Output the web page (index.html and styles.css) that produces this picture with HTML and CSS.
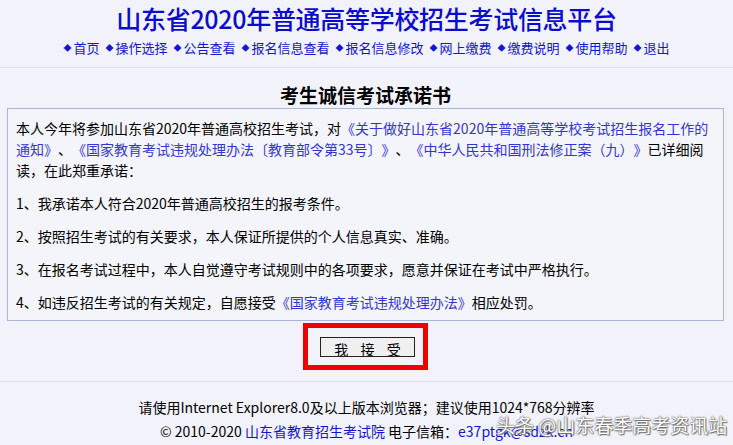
FILE: index.html
```html
<!DOCTYPE html>
<html lang="zh-CN">
<head>
<meta charset="utf-8">
<title>山东省2020年普通高等学校招生考试信息平台</title>
<link rel="stylesheet" href="styles.css">
</head>
<body>
<div class="page">
  <header class="top">
    <h1 class="site-title">山东省2020年普通高等学校招生考试信息平台</h1>
    <nav class="nav">
      <a href="#"><span class="dot">◆</span>首页</a>
      <a href="#"><span class="dot">◆</span>操作选择</a>
      <a href="#"><span class="dot">◆</span>公告查看</a>
      <a href="#"><span class="dot">◆</span>报名信息查看</a>
      <a href="#"><span class="dot">◆</span>报名信息修改</a>
      <a href="#"><span class="dot">◆</span>网上缴费</a>
      <a href="#"><span class="dot">◆</span>缴费说明</a>
      <a href="#"><span class="dot">◆</span>使用帮助</a>
      <a href="#"><span class="dot">◆</span>退出</a>
    </nav>
  </header>
  <main class="main">
    <h2 class="heading">考生诚信考试承诺书</h2>
    <div class="pledge">
      <p>本人今年将参加山东省2020年普通高校招生考试，对<a href="#">《关于做好山东省2020年普通高等学校考试招生报名工作的通知》</a>、<a href="#">《国家教育考试违规处理办法〔教育部令第33号〕》</a>、<a href="#">《中华人民共和国刑法修正案（九）》</a>已详细阅读，在此郑重承诺：</p>
      <p>1、我承诺本人符合2020年普通高校招生的报考条件。</p>
      <p>2、按照招生考试的有关要求，本人保证所提供的个人信息真实、准确。</p>
      <p>3、在报名考试过程中，本人自觉遵守考试规则中的各项要求，愿意并保证在考试中严格执行。</p>
      <p>4、如违反招生考试的有关规定，自愿接受<a href="#">《国家教育考试违规处理办法》</a>相应处罚。</p>
    </div>
    <div class="accept-wrap">
      <div class="accept-frame">
        <button class="accept-btn" type="button">我 接 受</button>
      </div>
    </div>
  </main>
  <footer class="footer">
    <p>请使用Internet Explorer8.0及以上版本浏览器；建议使用1024*768分辨率</p>
    <p>© 2010-2020 <a href="#">山东省教育招生考试院</a> 电子信箱：<a href="#">e37ptgk@sdzk.cn</a></p>
  </footer>
  <div class="watermark">头条 @山东春季高考资讯站</div>
</div>
</body>
</html>
```

FILE: styles.css
```css
* { box-sizing: border-box; }
html, body {
  margin: 0;
  padding: 0;
  background: #f2f3fa;
}
body {
  font-family: "Noto Sans CJK SC", "Noto Sans", sans-serif;
  color: #000;
  text-spacing-trim: space-all;
}
.page {
  position: relative;
  width: 733px;
  height: 445px;
  overflow: hidden;
}
.top {
  border-bottom: 1px solid #dcdfee;
  padding-top: 3px;
  height: 68px;
}
.site-title {
  margin: 0;
  text-align: center;
  font-size: 25px;
  line-height: 30px;
  font-weight: 500;
  color: #0b0bd0;
  letter-spacing: -0.3px;
}
.nav {
  display: flex;
  justify-content: center;
  gap: 6px;
  margin-top: 6px;
  font-size: 13px;
  line-height: 18px;
}
.nav a {
  color: #1414d2;
  text-decoration: none;
  display: inline-flex;
  align-items: center;
}
.dot {
  font-size: 8px;
  margin-right: 2px;
}
.main {
  padding: 15px 9px 0 7px;
}
.heading {
  margin: 0;
  text-align: center;
  font-size: 19px;
  line-height: 24px;
  font-weight: 700;
  color: #000;
}
.pledge {
  margin-top: 1px;
  border: 1px solid #a9b6da;
  background: #f4f5fb;
  padding: 9px 8px 7px 8px;
  font-size: 14px;
  line-height: 21px;
}
.pledge p {
  margin: 0 0 12px 0;
}
.pledge p:last-child {
  margin-bottom: 0;
}
.pledge a {
  color: #3434d4;
  text-decoration: none;
}
.accept-wrap {
  display: flex;
  justify-content: center;
  margin-top: 2px;
}
.accept-frame {
  width: 125px;
  height: 47px;
  border: 5px solid #f00000;
  padding: 9px 8px 0 12px;
}
.accept-btn {
  display: block;
  width: 95px;
  height: 20px;
  margin: 0;
  padding: 2px 0 0 0;
  border: 1px solid #222;
  background: #f0f0f0;
  font-family: "Noto Sans CJK SC", sans-serif;
  font-size: 14px;
  line-height: 18px;
  word-spacing: 9px;
  color: #000;
  text-align: center;
  overflow: hidden;
}
.footer {
  margin-top: 11px;
  border-top: 1px solid #dcdfee;
  padding-top: 13px;
  text-align: center;
  font-size: 14px;
  line-height: 24px;
}
.footer p {
  margin: 0;
}
.footer a {
  color: #1414d2;
  text-decoration: none;
}
.watermark {
  position: absolute;
  left: 496px;
  top: 412px;
  font-size: 19px;
  line-height: 26px;
  color: #ffffff;
  text-shadow: 0 0 1px #555, 0 0 2px #666, 1px 1px 1px #777;
  white-space: nowrap;
}
```
